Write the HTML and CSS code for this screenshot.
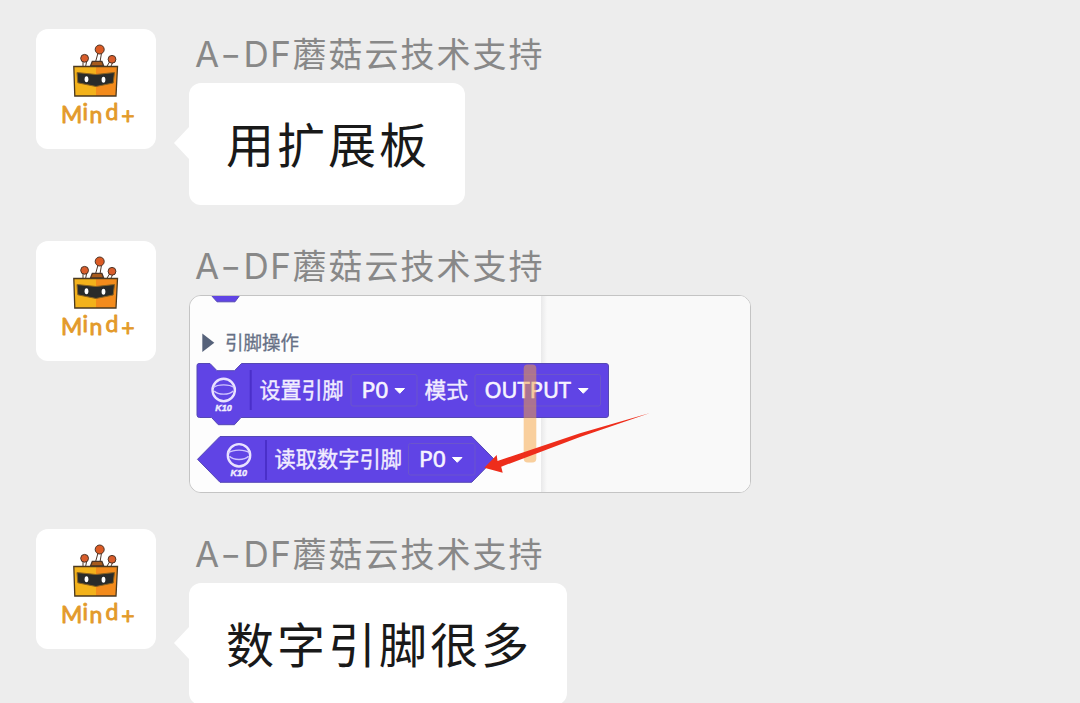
FILE: index.html
```html
<!DOCTYPE html>
<html lang="zh-CN">
<head>
    <meta charset="UTF-8">
    <meta name="viewport" content="width=device-width, initial-scale=1.0">
    <title>群聊</title>
    <link rel="stylesheet" href="styles.css">
</head>
<body>
    <!-- Shared avatar and block icon -->
    <svg class="symbols" width="0" height="0">
        <symbol id="avatar" viewBox="0 0 120 120">
            <g stroke="#4b3427" stroke-width="1">
                <path d="M47 33v5M50.500 33l-1 5M62 24l-2.500 9M65.500 24l-1.500 9M73.500 33l-3 5M76.500 34l-2 4" fill="none"/>
                <path d="M54.500 37l1.800-4.600h9.600l1.800 4.600z" fill="#a85b1c" stroke-width="1.300"/>
                <circle cx="48.600" cy="29.300" r="3.900" fill="#d95d2b"/>
                <circle cx="63.700" cy="20.500" r="4.500" fill="#dc5b24"/>
                <circle cx="76" cy="30.300" r="3.900" fill="#d95d2b"/>
            </g>
            <path d="M37.800 37.500H60V67H38.800z" fill="#f3b21b"/>
            <path d="M60 37.500h21.500L80 67H60z" fill="#f38b1c"/>
            <path d="M37.800 37.500h43.700L80 67H38.800z" fill="none" stroke="#4a3921" stroke-width="1.300"/>
            <path d="M41 43.500l19 2 18.500-2-1.300 10.500L60 57.500l-18.200-3.700z" fill="#292b2a" stroke="#8a621f" stroke-width="1"/>
            <ellipse cx="50.500" cy="50.200" rx="1.900" ry="3" fill="#fff"/>
            <ellipse cx="67.500" cy="50.800" rx="1.900" ry="3" fill="#fff"/>
            <g class="logo-text">
                <text x="25" y="93.500">M</text>
                <text x="46.500" y="90.500">i</text>
                <text x="53.500" y="93.500">n</text>
                <text x="69.500" y="91">d</text>
                <text x="85.300" y="94.500">+</text>
            </g>
        </symbol>
        <symbol id="k10" viewBox="0 0 30 36">
            <circle cx="15" cy="13" r="11.200" fill="none" stroke="#e9e2ff" stroke-width="2.400"/>
            <path d="M4.500 10.500c5-3.500 16-3.500 21 0M5.500 14c4 4.200 15 4.200 19 0" fill="none" stroke="#cfc4ff" stroke-width="1.400"/>
            <text class="k10-text" x="6.500" y="34" textLength="16.500" lengthAdjust="spacingAndGlyphs">K10</text>
        </symbol>
    </svg>

    <div class="chat">
        <div class="message">
            <svg class="avatar"><use href="#avatar"/></svg>
            <div class="content">
                <div class="name"><span>A<i>-</i>DF</span>蘑菇云技术支持</div>
                <div class="bubble">用扩展板</div>
            </div>
        </div>

        <div class="message">
            <svg class="avatar"><use href="#avatar"/></svg>
            <div class="content">
                <div class="name"><span>A<i>-</i>DF</span>蘑菇云技术支持</div>
                <div class="picture">
                    <svg viewBox="1 1 560 196" width="560" height="196">
                        <defs>
                            <linearGradient id="edge">
                                <stop offset="0" stop-color="#e9e9ea"/>
                                <stop offset="1" stop-color="#f9f9f9"/>
                            </linearGradient>
                        </defs>
                        <rect width="562" height="198" fill="#fdfdfd"/>
                        <rect x="352" width="210" height="198" fill="#f9f9f9"/>
                        <rect x="352" width="6" height="198" fill="url(#edge)"/>

                        <path d="M22 0h29l-5 6.800H28z" class="block"/>
                        <path d="M13.300 38.500l12 9.200-12 9.200z" fill="#56627a"/>
                        <text class="group-title" x="36" y="55.300" textLength="74" lengthAdjust="spacingAndGlyphs">引脚操作</text>

                        <!-- Set pin mode -->
                        <path class="block" d="M10 68.500h11l7 7.200h17.500L52.500 68.500H417q2.500 0 2.500 2.500V120q0 2.500-2.500 2.500H52l-6.500 7.200H29.300l-6.800-7.200H10.500Q8 122.500 8 120V70.500Q8 68.500 10 68.500z"/>
                        <use href="#k10" x="19.700" y="82" width="30" height="36"/>
                        <path d="M61.700 75v40" class="divider"/>
                        <text class="block-text" x="70.500" y="103" textLength="84" lengthAdjust="spacingAndGlyphs">设置引脚</text>
                        <rect class="field" x="162" y="79.500" width="66" height="31.500" rx="2"/>
                        <text class="block-value" x="172.500" y="102.700" textLength="27" lengthAdjust="spacingAndGlyphs">P0</text>
                        <path class="caret" d="M206 93.500h9.500l-4.750 4.800z"/>
                        <text class="block-text" x="235.500" y="103" textLength="43.500" lengthAdjust="spacingAndGlyphs">模式</text>
                        <rect class="field" x="286" y="79.500" width="125.500" height="31.500" rx="2"/>
                        <text class="block-value" x="295.500" y="102.700" textLength="86.500" lengthAdjust="spacingAndGlyphs">OUTPUT</text>
                        <path class="caret" d="M389.500 93.500h9.500l-4.750 4.800z"/>

                        <!-- Read digital pin -->
                        <path class="block" d="M8.500 164.300l22.500-22.800h251.700l22.500 22.800-22.500 23H31z"/>
                        <use href="#k10" x="35" y="147.300" width="30" height="36"/>
                        <path d="M77 145v40" class="divider"/>
                        <text class="block-text" x="85.500" y="172" textLength="127.500" lengthAdjust="spacingAndGlyphs">读取数字引脚</text>
                        <rect class="field" x="219.500" y="148.500" width="66.500" height="31.500" rx="2"/>
                        <text class="block-value" x="230" y="171.800" textLength="27" lengthAdjust="spacingAndGlyphs">P0</text>
                        <path class="caret" d="M263.500 162.500h9.500l-4.750 4.800z"/>

                        <rect x="334.700" y="69.500" width="12.600" height="98" rx="4" fill="#f5a13e" fill-opacity=".5"/>
                        <path d="M295.300 172.800l12.400-12.800.8 6L391 138.300l70-20.400-70 24-78.800 29.800 1.500 6z" fill="#ee2d1b"/>
                    </svg>
                </div>
            </div>
        </div>

        <div class="message">
            <svg class="avatar"><use href="#avatar"/></svg>
            <div class="content">
                <div class="name"><span>A<i>-</i>DF</span>蘑菇云技术支持</div>
                <div class="bubble">数字引脚很多</div>
            </div>
        </div>
    </div>
</body>
</html>
```
FILE: styles.css
```css
* {
  box-sizing: border-box;
}

body {
  margin: 0;
  height: 703px;
  overflow: hidden;
  background-color: #ededed;
  font-family: "Noto Sans CJK SC", sans-serif;
}

.symbols {
  display: none;
}

.chat {
  display: flex;
  flex-direction: column;
  gap: 36px;
  padding: 29px 36px 0;
}

.message {
  display: flex;
  align-items: flex-start;
  gap: 33px;
}

.avatar {
  flex: none;
  width: 120px;
  height: 120px;
  border-radius: 12px;
  background-color: #fff;
}

.logo-text {
  font-family: Lato, sans-serif;
  font-size: 23px;
  fill: #e39a2b;
  stroke: #e39a2b;
  stroke-width: 0.9px;
  stroke-linejoin: round;
}

.name {
  height: 54px;
  padding-left: 6px;
  color: #888;
  font-size: 34px;
  line-height: 47px;
  letter-spacing: 2px;
  white-space: nowrap;
}

.name span {
  font-family: Inter, sans-serif;
  font-size: 35px;
  letter-spacing: 1.6px;
}

.name i {
  display: inline-block;
  margin: 0 3px 0 2px;
  font-style: normal;
  transform: scaleX(1.3);
}

.bubble {
  position: relative;
  width: fit-content;
  height: 122px;
  padding: 0 35px 0 37px;
  border-radius: 12px;
  background-color: #fff;
  color: #191919;
  font-size: 48px;
  line-height: 119px;
  letter-spacing: 3px;
  white-space: nowrap;
}

/* bubble tail */
.bubble::before {
  content: "";
  position: absolute;
  left: -15px;
  top: 44px;
  border: 16px solid transparent;
  border-left: none;
  border-right: 15px solid #fff;
}

.picture {
  width: 562px;
  height: 198px;
  border: 1px solid #c4c4c4;
  border-radius: 12px;
  overflow: hidden;
}

.picture svg {
  display: block;
}

.block {
  fill: #6044e5;
  stroke: #5548b5;
  stroke-width: 1px;
}

.divider {
  stroke: #4a2fc9;
  stroke-width: 2px;
}

.field {
  fill: none;
  stroke: #6b55cc;
  stroke-width: 1px;
}

.group-title {
  font-size: 19.5px;
  fill: #667085;
  stroke: #667085;
  stroke-width: 0.3px;
}

.block-text {
  font-size: 22px;
  fill: #f1edff;
  stroke: #f1edff;
  stroke-width: 0.4px;
}

.block-value {
  font-family: "Noto Sans", sans-serif;
  font-size: 21.5px;
  fill: #f6f3ff;
  stroke: #f6f3ff;
  stroke-width: 0.6px;
}

.caret {
  fill: #fff;
  stroke: #fff;
  stroke-width: 1px;
  stroke-linejoin: round;
}

.k10-text {
  font-family: "Liberation Sans", sans-serif;
  font-size: 8.5px;
  font-weight: bold;
  font-style: italic;
  fill: #f1edff;
  stroke: #f1edff;
  stroke-width: 0.4px;
}
```
